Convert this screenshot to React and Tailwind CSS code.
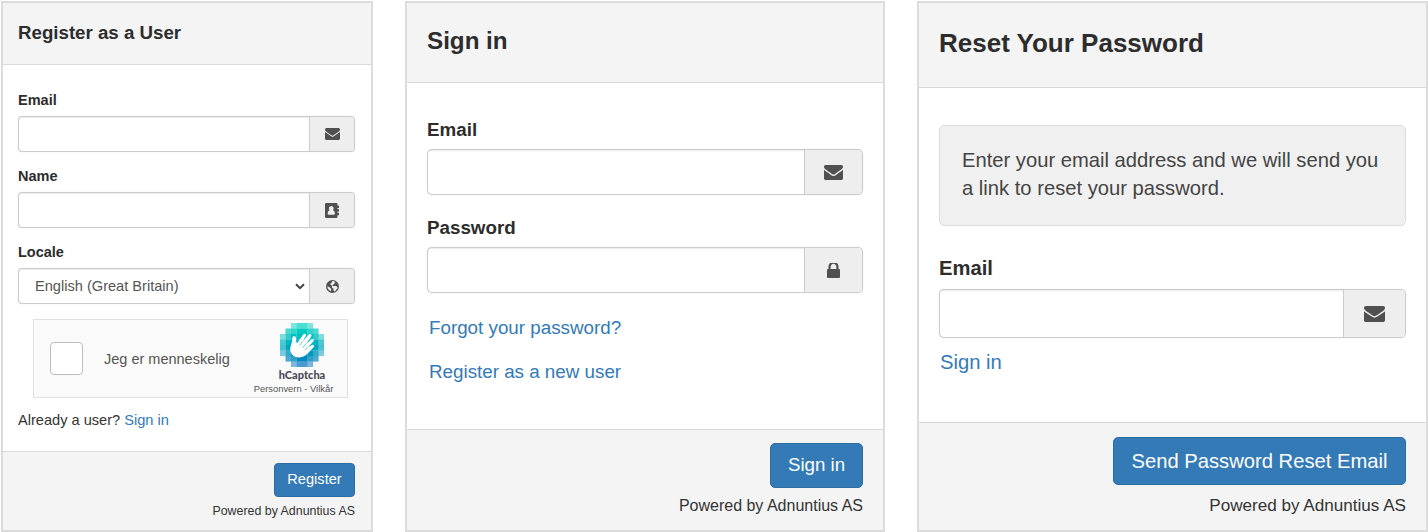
import React from "react";

const ENVELOPE =
  "M1792 710v794q0 66-47 113t-113 47h-1472q-66 0-113-47t-47-113v-794q44 49 101 87 362 246 497 345 57 42 92.5 65.5t94.5 48 110 24.5h2q51 0 110-24.5t94.5-48 92.5-65.5q170-123 498-345 57-39 100-87zm0-294q0 79-49 151t-122 123q-376 261-468 325-10 7-42.5 31t-54 38.5-52 32.5-57.5 27-50 9h-2q-23 0-50-9t-57.5-27-52-32.5-54-38.5-42.5-31q-91-64-262-182.5t-205-142.5q-62-42-117-115.5t-55-136.5q0-78 41.5-130t118.5-52h1472q65 0 112.5 47t47.5 113z";

function Envelope({ className }) {
  return (
    <svg viewBox="0 256 1792 1408" preserveAspectRatio="none" fill="currentColor" className={className}>
      <path d={ENVELOPE} />
    </svg>
  );
}

function Lock({ className }) {
  return (
    <svg viewBox="320 256 1152 1280" preserveAspectRatio="none" fill="currentColor" className={className}>
      <path d="M640 768h512v-192q0-106-75-181t-181-75-181 75-75 181v192zm832 96v576q0 40-28 68t-68 28h-960q-40 0-68-28t-28-68v-576q0-40 28-68t68-28h32v-192q0-184 132-316t316-132 316 132 132 316v192h32q40 0 68 28t28 68z" />
    </svg>
  );
}

function AddressBook({ className }) {
  return (
    <svg viewBox="0 0 14 15" className={className}>
      <path
        fill="currentColor"
        fillRule="evenodd"
        d="M1.2 0h10.1q1.2 0 1.2 1.2v1.3h1.1q.4 0 .4.4v1.6q0 .4-.4.4h-1.1v1.2h1.1q.4 0 .4.4v1.7q0 .4-.4.4h-1.1v1.2h1.1q.4 0 .4.4v1.6q0 .4-.4.4h-1.1v1.6q0 1.2-1.2 1.2H1.2Q0 15 0 13.800V1.200Q0 0 1.200 0zM6.300 2.900a2.400 2.500 0 0 0-1.700 4.300q-2 .3-2 3.200 0 1.300 1.100 1.300h5.100q1.100 0 1.100-1.300 0-2.900-2-3.200a2.400 2.500 0 0 0-1.600-4.300z"
      />
    </svg>
  );
}

function Globe({ className }) {
  return (
    <svg viewBox="0 0 13 13" className={className}>
      <circle cx="6.5" cy="6.500" r="6.500" fill="currentColor" />
      <path
        fill="#eee"
        d="M6.200 1.100l1.900.1 1.400.7-1.200.9.500.8-1.500.8-1.100 1.400 1.200.4 1.900-.5 1.700.9.700 1.300-1.300 1.500-1 1.500-1.300.7-.6-1.500-.1-1.500-1.300-.9-.3-1.400.2-1-1.200-.3-.6-1.200 1.300-.9z"
      />
      <path fill="#eee" d="M1.400 6.200l1.600.8 1.500 1.300.8 1.300-.8 1.700-1.800-1.500-1.100-1.900z" />
    </svg>
  );
}

const TILES = [
  [0, 0, 0.5, 0.7, 0.7, 0.5, 0, 0],
  [0, 0.7, 0.8, 1, 1, 0.8, 0.7, 0],
  [0.5, 0.8, 1, 1, 1, 1, 0.8, 0.5],
  [0.7, 1, 1, 1, 1, 1, 1, 0.7],
  [0.7, 1, 1, 1, 1, 1, 1, 0.7],
  [0.5, 0.8, 1, 1, 1, 1, 0.8, 0.5],
  [0, 0.7, 0.8, 1, 1, 0.8, 0.7, 0],
  [0, 0, 0.5, 0.7, 0.7, 0.5, 0, 0],
];
const ROW_COLORS = ["#00d4bf", "#00cbc0", "#00bfc0", "#00b3c0", "#00a6c0", "#0098bf", "#0089bf", "#0074bf"];

function CaptchaLogo() {
  return (
    <svg viewBox="0 0 44 44" className="h-[44px] w-[44px]">
      {TILES.map((row, y) =>
        row.map((o, x) =>
          o ? (
            <rect key={`${x}-${y}`} x={x * 5.5} y={y * 5.5} width="5.6" height="5.6" fill={ROW_COLORS[y]} fillOpacity={o} />
          ) : null
        )
      )}
      <path
        fill="#fff"
        d="M10.300 27.500c-.5-3.500 1.200-5.800 1.600-8.500.4-2.400.2-5.900 2.100-6 2.300-.1 2.300 3.200 1.900 5.900l1.300 1 6-8.300c1.400-1.700 3.600-.4 2.700 1.400l-3.300 5.800 6.200-7.300c1.500-1.500 3.600.1 2.500 1.900l-5.500 7.900 5.500-4.900c1.600-1.300 3.300.4 2.200 1.900l-5.600 6.300 4.100-2.600c1.600-.9 2.900.9 1.700 2.200-3 2.900-5 5.500-8.200 8.100-5.200 4-14.100 2.300-15.200-4.800z"
      />
      <path
        fill="none"
        stroke="#0aa5c0"
        strokeWidth=".6"
        strokeLinecap="round"
        d="M22.200 18.800l-2.300 3.400M25.600 21.400l-2.600 3.100M27.300 24.500l-2.500 2.200"
      />
    </svg>
  );
}

function Panel({ className, headerClass, titleClass, title, bodyClass, footerClass, children, footer }) {
  return (
    <section className={`flex shrink-0 flex-col border-2 border-[#dcdcdc] bg-white ${className}`}>
      <header className={`flex shrink-0 items-center border-b border-[#d9d9d9] bg-[#f4f4f4] ${headerClass}`}>
        <h2 className={`whitespace-nowrap font-bold text-[#2d2d2d] ${titleClass}`}>{title}</h2>
      </header>
      <div className={`flex grow flex-col ${bodyClass}`}>{children}</div>
      <footer className={`flex shrink-0 flex-col items-end border-t border-[#d9d9d9] bg-[#f4f4f4] ${footerClass}`}>{footer}</footer>
    </section>
  );
}

function Field({ className, label, labelClass, boxClass, addonClass, icon, children }) {
  return (
    <div className={`flex flex-col ${className}`}>
      <label className={`font-bold text-[#2d2d2d] ${labelClass}`}>{label}</label>
      <div className={`flex overflow-hidden border border-[#ccc] bg-white shadow-[0_0_1px_#ccc] ${boxClass}`}>
        <div className="flex grow items-center justify-between shadow-[inset_0_1px_1px_rgba(0,0,0,0.08)]">{children}</div>
        <div className={`flex shrink-0 items-center justify-center border-l border-[#ccc] bg-[#eee] text-[#505050] ${addonClass}`}>{icon}</div>
      </div>
    </div>
  );
}

function Button({ className, children }) {
  return (
    <button className={`flex shrink-0 items-center justify-center whitespace-nowrap border border-[#2e6da4] bg-[#337ab7] text-white ${className}`}>
      {children}
    </button>
  );
}

export default function App() {
  return (
    <main className="flex h-[532px] w-[1428px] overflow-hidden bg-white pt-px font-['Liberation_Sans',Arial,sans-serif] text-[#333]">
      <Panel
        className="ml-px h-[531px] w-[372px]"
        headerClass="h-[62px] pb-[2px] pl-[15px]"
        titleClass="text-[18.7px] leading-6"
        title="Register as a User"
        bodyClass="pl-[15px] pr-[16px] pt-[25px]"
        footerClass="h-[79px] pr-[16px] pt-[11px]"
        footer={
          <>
            <Button className="h-[34px] w-[81px] rounded-[4px] text-[14.6px]">Register</Button>
            <p className="mt-[6px] text-[12.4px] leading-[17px]">Powered by Adnuntius AS</p>
          </>
        }
      >
        <Field
          className="h-[76px]"
          label="Email"
          labelClass="mb-[6px] text-[14.5px] leading-5"
          boxClass="h-[36px] rounded-[4px]"
          addonClass="w-[45px]"
          icon={<Envelope className="h-[12px] w-[15px]" />}
        />
        <Field
          className="h-[76px]"
          label="Name"
          labelClass="mb-[6px] text-[14.5px] leading-5"
          boxClass="h-[36px] rounded-[4px]"
          addonClass="w-[45px]"
          icon={<AddressBook className="h-[15px] w-[14px]" />}
        />
        <Field
          className="h-[77px]"
          label="Locale"
          labelClass="mb-[6px] text-[14.5px] leading-5"
          boxClass="h-[36px] rounded-[4px]"
          addonClass="w-[45px]"
          icon={<Globe className="h-[13px] w-[13px]" />}
        >
          <span className="pl-[16px] pt-[2px] text-[14.6px] text-[#555]">English (Great Britain)</span>
          <svg viewBox="0 0 10 7" className="mr-[4px] h-[7px] w-[10px]">
            <path d="M1 1.200l4 4 4-4" fill="none" stroke="#444" strokeWidth="2" />
          </svg>
        </Field>
        <div className="ml-[15px] flex h-[79px] w-[315px] items-center border border-[#e0e0e0] bg-[#fafafa] pl-[16px]">
          <div className="h-[33px] w-[33px] shrink-0 rounded-[4px] border border-[#bdbdbd] bg-white" />
          <span className="ml-[21px] w-[149px] shrink-0 whitespace-nowrap pt-[2px] text-[14.5px] text-[#555]">Jeg er menneskelig</span>
          <div className="flex h-full w-[98px] shrink-0 flex-col items-center pt-[3px]">
            <CaptchaLogo />
            <span className="font-['Lato',sans-serif] text-[11px] font-black leading-[15px] text-[#4a4a57]">hCaptcha</span>
            <span className="mr-[17px] whitespace-nowrap text-[9.4px] leading-[14px] text-[#555]">Personvern - Vilkår</span>
          </div>
        </div>
        <p className="mt-[12px] text-[14.6px] leading-5">
          Already a user? <a className="text-[#337ab7]">Sign in</a>
        </p>
      </Panel>

      <Panel
        className="ml-[32px] h-[531px] w-[480px]"
        headerClass="h-[80px] pb-[3px] pl-[20px]"
        titleClass="text-[24.2px] leading-8"
        title="Sign in"
        bodyClass="pl-[20px] pr-[20px] pt-[33px]"
        footerClass="h-[101px] pr-[20px] pt-[13px]"
        footer={
          <>
            <Button className="h-[45px] w-[93px] rounded-[5px] text-[18.7px]">Sign in</Button>
            <p className="mt-[8px] text-[16px] leading-5">Powered by Adnuntius AS</p>
          </>
        }
      >
        <Field
          className="h-[98px]"
          label="Email"
          labelClass="mb-[6px] pt-px text-[18.8px] leading-[26px]"
          boxClass="h-[46px] rounded-[5px]"
          addonClass="w-[58px]"
          icon={<Envelope className="h-[15px] w-[19px]" />}
        />
        <Field
          className="h-[98px]"
          label="Password"
          labelClass="mb-[6px] pt-px text-[18.8px] leading-[26px]"
          boxClass="h-[46px] rounded-[5px]"
          addonClass="w-[58px]"
          icon={<Lock className="h-[15px] w-[13px]" />}
        />
        <a className="ml-[2px] mt-[4px] h-[44px] text-[18.8px] leading-6 text-[#337ab7]">Forgot your password?</a>
        <a className="ml-[2px] text-[18.8px] leading-6 text-[#337ab7]">Register as a new user</a>
      </Panel>

      <Panel
        className="ml-[32px] h-[531px] w-[511px]"
        headerClass="h-[85px] pb-[4px] pl-[20px]"
        titleClass="text-[26px] leading-8"
        title="Reset Your Password"
        bodyClass="pl-[20px] pr-[20px] pt-[37px]"
        footerClass="h-[108px] pr-[20px] pt-[14px]"
        footer={
          <>
            <Button className="h-[48px] w-[293px] rounded-[5px] text-[20.2px]">Send Password Reset Email</Button>
            <p className="mt-[10px] text-[17.100px] leading-[21px]">Powered by Adnuntius AS</p>
          </>
        }
      >
        <p className="h-[101px] whitespace-nowrap rounded-[5px] border border-[#ddd] bg-[#f0f0f0] pl-[22px] pt-[21px] text-[20.2px] leading-[27.500px] text-[#444]">
          Enter your email address and we will send you
          <br />a link to reset your password.
        </p>
        <Field
          className="mt-[29px] h-[84px]"
          label="Email"
          labelClass="mb-[8px] text-[20.2px] leading-[26px]"
          boxClass="h-[49px] rounded-[5px]"
          addonClass="w-[62px]"
          icon={<Envelope className="h-[16px] w-[21px]" />}
        />
        <a className="ml-px mt-[11px] text-[20.2px] leading-6 text-[#337ab7]">Sign in</a>
      </Panel>
    </main>
  );
}
